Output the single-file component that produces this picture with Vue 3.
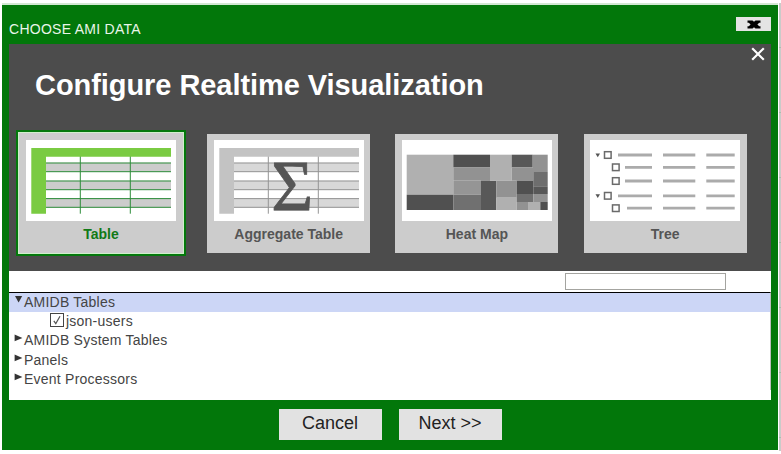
<script setup>
import { ref } from 'vue'

const selected = ref('table')
const query = ref('')

const cards = [
  { id: 'table', label: 'Table' },
  { id: 'aggregate', label: 'Aggregate Table' },
  { id: 'heatmap', label: 'Heat Map' },
  { id: 'tree', label: 'Tree' },
]

const bands = [22.7, 40.7, 58.3]

// x, y, width, height, fill
const tiles = [
  [4.7, 14.7, 46.6, 40, '#b0b0b0'],
  [4.7, 54.7, 46.6, 15.3, '#505050'],
  [51.3, 14.7, 36.7, 12.8, '#505050'],
  [51.3, 27.5, 36.7, 13.2, '#929292'],
  [51.3, 40.7, 27.7, 14, '#959595'],
  [51.3, 54.7, 27.7, 15.3, '#707070'],
  [79, 40.7, 15.3, 29.3, '#585858'],
  [88, 14.7, 21.7, 26, '#b0b0b0'],
  [109.7, 14.7, 21, 12.8, '#585858'],
  [109.7, 27.5, 21.6, 13.2, '#929292'],
  [130.7, 14.7, 15, 17.3, '#929292'],
  [131.3, 32, 14.4, 14.3, '#6e6e6e'],
  [94.3, 40.7, 20.4, 17, '#929292'],
  [94.3, 57.7, 20.4, 12.3, '#b0b0b0'],
  [114.7, 40.7, 16.6, 13.3, '#505050'],
  [131.3, 46.3, 14.4, 7.7, '#585858'],
  [114.7, 54, 16.6, 8, '#707070'],
  [131.3, 54, 14.4, 8, '#929292'],
  [114.7, 62, 12, 8, '#929292'],
  [126.7, 62, 11.6, 8, '#b0b0b0'],
  [138.3, 62, 7.4, 8, '#505050'],
]

const branches = [
  { y: 15, box: 14, line: 28, open: true },
  { y: 27.3, box: 22, line: 35, open: false },
  { y: 41, box: 22, line: 35, open: false },
  { y: 55.8, box: 14, line: 28, open: true },
  { y: 68.2, box: 22, line: 37, open: false },
]

const rows = [
  { label: 'AMIDB Tables', kind: 'open', active: true },
  { label: 'json-users', kind: 'leaf' },
  { label: 'AMIDB System Tables', kind: 'closed' },
  { label: 'Panels', kind: 'closed' },
  { label: 'Event Processors', kind: 'closed' },
]
</script>

<template>
  <div class="page">
    <section class="dialog">
      <header class="titlebar">
        <span class="caption">CHOOSE AMI DATA</span>
        <button class="close" aria-label="Close">
          <svg width="14" height="9" viewBox="0 0 14 9">
            <path d="M.5.500h5L7 1.700 8.500.500h5v2.200h-1.300L10.400 4.500l1.800 1.800h1.300v2.200h-5L7 7.300 5.500 8.500h-5V6.300h1.300L3.600 4.500 1.800 2.700H.500z" fill="#000" />
          </svg>
        </button>
      </header>

      <div class="body">
        <div class="hero">
          <div class="hero-head">
            <h1>Configure Realtime Visualization</h1>
            <svg class="dismiss" width="14" height="14" viewBox="0 0 14 14">
              <path d="M1.200 1.200 12.800 12.800M12.800 1.200 1.200 12.800" stroke="#fff" stroke-width="2.200" />
            </svg>
          </div>
          <div class="cards">
            <div
              v-for="card in cards"
              :key="card.id"
              class="card"
              :class="{ selected: card.id === selected }"
              @click="selected = card.id"
            >
              <svg class="thumb" width="150" height="81" viewBox="0 0 150 81">
                <g v-if="card.id === 'table' || card.id === 'aggregate'" :class="['grid', card.id]">
                  <template v-for="y in bands" :key="y">
                    <rect class="band" x="20" :y="y" width="125" height="9.300" />
                    <path class="rule" :d="`M20 ${y + 0.3}H145M20 ${y + 9}H145`" />
                  </template>
                  <path class="rule" d="M54.300 16V73.700M104.300 16V73.700" />
                  <path class="head" d="M5.300 8H145V16.700H20V73.700H5.300z" />
                  <text v-if="card.id === 'aggregate'" class="sigma" x="78.300" y="69.700">Σ</text>
                </g>
                <g v-else-if="card.id === 'heatmap'">
                  <rect
                    v-for="(t, i) in tiles"
                    :key="i"
                    :x="t[0]"
                    :y="t[1]"
                    :width="t[2]"
                    :height="t[3]"
                    :fill="t[4]"
                  />
                </g>
                <g v-else>
                  <template v-for="b in branches" :key="b.y">
                    <path v-if="b.open" :d="`M5.500 ${b.y - 1.500}h4.500l-2.250 3.800z`" fill="#555" />
                    <rect :x="b.box + 0.500" :y="b.y - 3.300" width="6.600" height="6.600" fill="#fff" stroke="#6a6a6a" stroke-width="1.500" />
                    <path :d="`M${b.line} ${b.y}H62M73 ${b.y}H105.300M116.300 ${b.y}H144.700`" stroke="#ababab" stroke-width="2.800" />
                  </template>
                </g>
              </svg>
              <span class="label">{{ card.label }}</span>
            </div>
          </div>
        </div>

        <div class="toolbar">
          <input v-model="query" class="search" type="text" />
        </div>

        <ul class="tree">
          <li v-for="row in rows" :key="row.label" :class="['row', row.kind, { active: row.active }]">
            <svg v-if="row.kind === 'open'" class="arrow" width="9" height="14" viewBox="0 0 9 14">
              <path d="M1 1h7.200L4.600 7.500z" fill="#333" />
            </svg>
            <svg v-else-if="row.kind === 'closed'" class="arrow" width="9" height="14" viewBox="0 0 9 14">
              <path d="M.6 1.500v6.800L8.400 4.900z" fill="#333" />
            </svg>
            <svg v-else class="check" width="14" height="14" viewBox="0 0 14 14">
              <rect x=".5" y=".5" width="13" height="13" fill="#fff" stroke="#444" />
              <path d="M3.800 7.800 5.800 10.600 10 3.300" fill="none" stroke="#555" stroke-width="1.200" />
            </svg>
            <span>{{ row.label }}</span>
          </li>
        </ul>
      </div>

      <footer class="actions">
        <button class="action">Cancel</button>
        <button class="action">Next &gt;&gt;</button>
      </footer>
    </section>
    <div class="margin"></div>
  </div>
</template>

<style>
body {
  background: #fff;
  overflow: hidden;
}
</style>

<style scoped>
.page {
  box-sizing: border-box;
  width: 781px;
  height: 454px;
  padding: 3px 0 3px 2px;
  display: flex;
  gap: 1px;
  background: #fff;
  font-family: "Liberation Sans", Arial, sans-serif;
}

.margin {
  width: 2px;
  height: 448px;
  background: repeating-linear-gradient(#cacbc9 0 64px, #aebcae 64px 65px) 0 -20px / 2px 520px;
}

.dialog {
  box-sizing: border-box;
  width: 776px;
  height: 447px;
  border-top: 2px solid #d3e8d3;
  padding: 0 7px;
  display: flex;
  flex-direction: column;
  background: #02770a;
}

.titlebar {
  height: 39px;
  display: flex;
  justify-content: space-between;
  align-items: flex-start;
}

.caption {
  margin-top: 16px;
  font-size: 14px;
  line-height: 16px;
  letter-spacing: 0.27px;
  color: #e9f5e9;
}

button {
  border: 0;
  border-radius: 0;
  padding: 0;
  font-family: inherit;
}

.close {
  width: 35px;
  height: 14px;
  margin-top: 12px;
  display: flex;
  align-items: center;
  justify-content: center;
  background: #e4e4e4;
}

.body {
  height: 356px;
  display: flex;
  flex-direction: column;
  background: #fff;
}

.hero {
  height: 227px;
  background: #4c4c4c;
}

.hero-head {
  height: 86px;
  padding: 0 6px 0 26px;
  display: flex;
  justify-content: space-between;
  align-items: flex-start;
}

h1 {
  margin: 24px 0 0;
  font-size: 29px;
  line-height: 34px;
  font-weight: bold;
  letter-spacing: -0.06px;
  color: #fff;
}

.dismiss {
  margin-top: 3px;
}

.cards {
  display: flex;
  align-items: flex-start;
  gap: 21px;
  padding-left: 7px;
}

.card {
  box-sizing: border-box;
  width: 163px;
  height: 119px;
  margin: 4px 0 0 4px;
  padding-top: 6px;
  display: flex;
  flex-direction: column;
  align-items: center;
  background: #ccc;
  color: #555;
}

.card + .card {
  margin-left: 4.200px;
}

.card.selected {
  width: 170px;
  height: 126px;
  margin: 0 -4px 0 0;
  padding-top: 6px;
  border: 2px solid #04780c;
  box-shadow: inset 0 0 0 1px #d0efcb;
  color: #117a17;
}

.thumb {
  display: block;
  overflow: visible;
  background: #fff;
}

.card.selected .thumb {
  margin-top: 2px;
}

.label {
  margin-top: 5px;
  font-size: 14px;
  line-height: 16px;
  font-weight: bold;
}

.table .head {
  fill: #7acb42;
}

.table .band {
  fill: #ccc;
}

.table .rule {
  stroke: #2d8d3a;
}

.aggregate .head {
  fill: #c3c3c3;
}

.aggregate .band {
  fill: #d8d8d8;
}

.aggregate .rule {
  stroke: #949494;
}

.sigma {
  font-family: "Liberation Serif", serif;
  font-size: 72px;
  text-anchor: middle;
  fill: #555;
  stroke: #555;
  stroke-width: 0.8px;
}

.toolbar {
  height: 21px;
  box-sizing: border-box;
  padding: 2px 45px 0 0;
  display: flex;
  justify-content: flex-end;
  align-items: flex-start;
}

.search {
  box-sizing: border-box;
  width: 161px;
  height: 17px;
  border: 1px solid #a4a4a0;
  border-radius: 0;
  padding: 0 3px;
  background: #fff;
  outline: none;
}

.tree {
  box-sizing: border-box;
  height: 98px;
  margin: 0;
  padding: 0;
  border-top: 1px solid #000;
  border-right: 1px solid #bdbdbd;
  list-style: none;
}

.row {
  box-sizing: border-box;
  height: 19.400px;
  padding: 0 0 2.400px 5px;
  display: flex;
  align-items: center;
  gap: 1px;
  font-size: 14px;
  line-height: 16px;
  letter-spacing: 0.230px;
  color: #444;
}

.row.active {
  background: #ccd6f6;
}

.row.leaf {
  padding-left: 41px;
  gap: 2px;
}

.check {
  margin-bottom: 1px;
}

.actions {
  display: flex;
  justify-content: center;
  gap: 17px;
  padding: 9px 0 0 1px;
}

.action {
  width: 103px;
  height: 31px;
  padding: 0 1px 2px 0;
  background: #e2e2e2;
  font-size: 18px;
  line-height: 29px;
  color: #222;
}
</style>
